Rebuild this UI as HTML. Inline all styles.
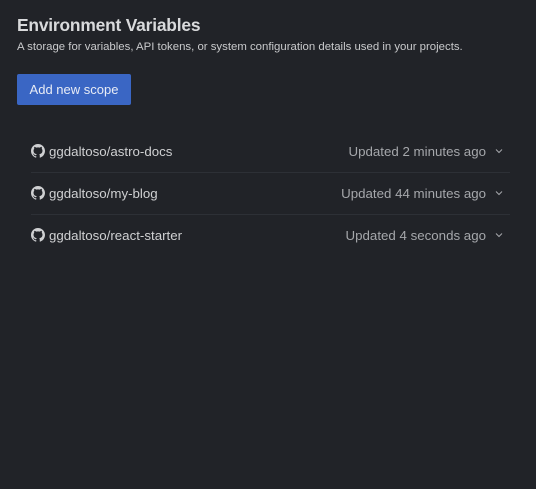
<html><head><style>
body{margin:0;background:#212328;font-family:"Liberation Sans",sans-serif;width:536px;height:489px;overflow:hidden;color:#d6d7d9}
h1{position:absolute;left:17px;top:15px;margin:0;font-size:17.4px;font-weight:bold;color:#d9dadc;letter-spacing:-0.2px}
.sub{position:absolute;left:17px;top:41px;font-size:11.4px;color:#c9cacc}
.btn{position:absolute;left:17px;top:74px;width:114px;height:31px;background:#3a66c4;border-radius:2px;color:#e8ecf5;font-size:13px;line-height:31px;text-align:center}
.row{position:absolute;left:31px;width:479px;height:42px;border-bottom:1px solid #2d3036;font-size:13.3px}
.row .n{position:absolute;left:18px;top:14px;color:#cfd0d2}
.row .u{position:absolute;right:24px;top:14px;color:#a5a7ab}
.row svg.g{position:absolute;left:0;top:14px}
.row svg.c{position:absolute;right:7px;top:18px}
</style></head><body>
<h1>Environment Variables</h1>
<div class="sub">A storage for variables, API tokens, or system configuration details used in your projects.</div>
<div class="btn">Add new scope</div>
<div class="row" style="top:130px"><svg class="g" width="14" height="14" viewBox="0 0 16 16"><path fill="#cfd0d2" d="M8 0C3.58 0 0 3.58 0 8c0 3.54 2.290 6.53 5.47 7.59.4.07.55-.17.55-.38v-1.33c-2.23.48-2.7-1.07-2.7-1.07-.36-.92-.89-1.17-.89-1.17-.73-.5.06-.49.06-.49.8.06 1.23.83 1.23.83.71 1.22 1.87.87 2.33.66.07-.52.28-.87.51-1.07-1.78-.2-3.65-.89-3.65-3.95 0-.87.31-1.59.82-2.15-.08-.2-.36-1.02.08-2.12 0 0 .67-.21 2.2.82a7.6 7.6 0 014 0c1.53-1.04 2.2-.82 2.2-.82.44 1.1.16 1.92.08 2.12.51.56.82 1.27.82 2.15 0 3.07-1.87 3.75-3.65 3.95.29.25.54.73.54 1.48v2.2c0 .21.15.46.55.38A8.01 8.01 0 0016 8c0-4.42-3.58-8-8-8z"/></svg><span class="n">ggdaltoso/astro-docs</span><span class="u">Updated 2 minutes ago</span><svg class="c" width="8" height="6" viewBox="0 0 8 6"><path d="M1 1.5l3 3 3-3" stroke="#a5a7ab" fill="none"/></svg></div>
<div class="row" style="top:172px"><svg class="g" width="14" height="14" viewBox="0 0 16 16"><path fill="#cfd0d2" d="M8 0C3.58 0 0 3.58 0 8c0 3.54 2.29 6.53 5.47 7.59.4.07.55-.17.55-.38v-1.33c-2.23.48-2.7-1.07-2.7-1.07-.36-.92-.89-1.17-.89-1.17-.73-.5.06-.49.06-.49.8.06 1.23.83 1.23.83.71 1.22 1.87.87 2.33.66.07-.52.28-.87.51-1.07-1.78-.2-3.65-.89-3.65-3.95 0-.87.31-1.59.82-2.15-.08-.2-.36-1.02.08-2.12 0 0 .67-.21 2.2.82a7.6 7.6 0 014 0c1.53-1.04 2.2-.82 2.2-.82.44 1.1.16 1.92.08 2.12.51.56.82 1.27.82 2.15 0 3.07-1.87 3.75-3.65 3.95.29.25.54.73.54 1.48v2.2c0 .21.15.46.55.38A8.01 8.01 0 0016 8c0-4.42-3.58-8-8-8z"/></svg><span class="n">ggdaltoso/my-blog</span><span class="u">Updated 44 minutes ago</span><svg class="c" width="8" height="6" viewBox="0 0 8 6"><path d="M1 1.5l3 3 3-3" stroke="#a5a7ab" fill="none"/></svg></div>
<div class="row" style="top:214px;border-bottom:none"><svg class="g" width="14" height="14" viewBox="0 0 16 16"><path fill="#cfd0d2" d="M8 0C3.58 0 0 3.58 0 8c0 3.54 2.29 6.53 5.47 7.59.4.07.55-.17.55-.38v-1.33c-2.23.48-2.7-1.07-2.7-1.07-.36-.92-.89-1.17-.89-1.17-.73-.5.06-.49.06-.49.8.06 1.23.83 1.23.83.71 1.22 1.87.87 2.33.66.07-.52.28-.87.51-1.07-1.78-.2-3.65-.89-3.65-3.95 0-.87.31-1.59.82-2.15-.08-.2-.36-1.02.08-2.12 0 0 .67-.21 2.2.82a7.6 7.6 0 014 0c1.53-1.04 2.2-.82 2.2-.82.44 1.1.16 1.92.08 2.12.51.56.82 1.27.82 2.15 0 3.07-1.87 3.75-3.65 3.95.29.25.54.73.54 1.48v2.2c0 .21.15.46.55.38A8.01 8.01 0 0016 8c0-4.42-3.58-8-8-8z"/></svg><span class="n">ggdaltoso/react-starter</span><span class="u">Updated 4 seconds ago</span><svg class="c" width="8" height="6" viewBox="0 0 8 6"><path d="M1 1.5l3 3 3-3" stroke="#a5a7ab" fill="none"/></svg></div>
</body></html>
